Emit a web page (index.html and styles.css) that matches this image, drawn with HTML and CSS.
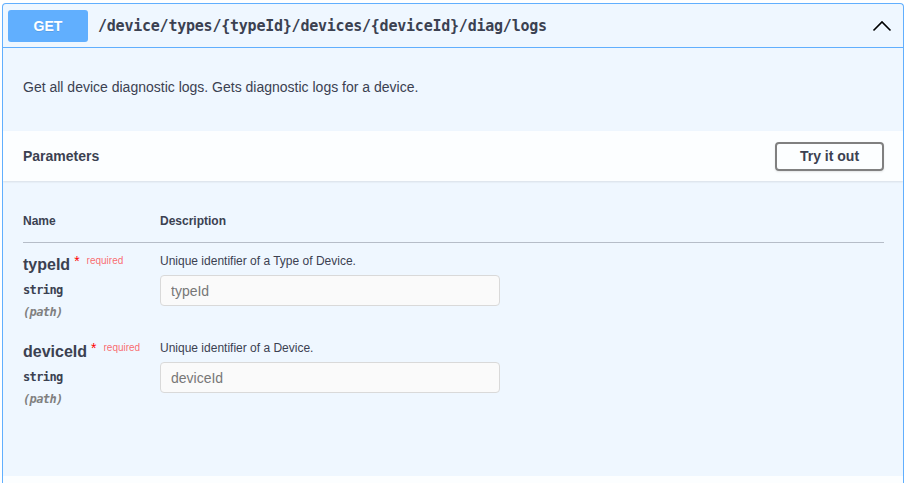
FILE: index.html
```html
<!DOCTYPE html>
<html>
<head>
<meta charset="utf-8">
<link rel="stylesheet" href="styles.css">
</head>
<body>
<div class="opblock">
  <div class="summary">
    <span class="method">GET</span>
    <span class="path">/device/types/{typeId}/devices/{deviceId}/diag/logs</span>
    <svg class="arrow" width="20" height="20" viewBox="0 0 20 20"><polyline points="1.5,14.5 10,6 18.5,14.5" fill="none" stroke="#000" stroke-width="1.6"/></svg>
  </div>
  <div class="description">
    <p>Get all device diagnostic logs. Gets diagnostic logs for a device.</p>
  </div>
  <div class="section-header">
    <h4>Parameters</h4>
    <button class="try-out">Try it out</button>
  </div>
  <div class="table-container">
    <div class="params-head">
      <div>Name</div>
      <div>Description</div>
    </div>
    <div class="param-row">
      <div class="col-name">
        <div class="pname">typeId<span class="star">*</span><span class="req">required</span></div>
        <div class="ptype">string</div>
        <div class="pin">(path)</div>
      </div>
      <div class="col-desc">
        <p>Unique identifier of a Type of Device.</p>
        <input type="text" placeholder="typeId">
      </div>
    </div>
    <div class="param-row">
      <div class="col-name">
        <div class="pname">deviceId<span class="star">*</span><span class="req">required</span></div>
        <div class="ptype">string</div>
        <div class="pin">(path)</div>
      </div>
      <div class="col-desc">
        <p>Unique identifier of a Device.</p>
        <input type="text" placeholder="deviceId">
      </div>
    </div>
  </div>
  <div class="responses-header"></div>
</div>
</body>
</html>
```

FILE: styles.css
```css
* { box-sizing: border-box; }
html, body { margin: 0; padding: 0; background: #fff; }
body { font-family: "Liberation Sans", Arial, sans-serif; color: #3b4151; }

.opblock {
  margin: 3px 1px 0 2px;
  border: 1px solid #61affe;
  border-bottom: none;
  border-radius: 4px 4px 0 0;
  background: #eff7ff;
  overflow: hidden;
}

.summary {
  display: flex;
  align-items: center;
  height: 44px;
  padding: 6px 11px 5px 5px;
  border-bottom: 1px solid #61affe;
}
.method {
  width: 80px;
  height: 32px;
  line-height: 32px;
  background: #61affe;
  color: #fff;
  border-radius: 3px;
  text-align: center;
  font-weight: bold;
  font-size: 14px;
  text-shadow: 0 1px 0 rgba(0,0,0,.1);
}
.path {
  flex: 1;
  padding-left: 10px;
  font-family: "DejaVu Sans Mono", monospace;
  font-weight: bold;
  font-size: 15px;
  letter-spacing: -0.23px;
  color: #3b4151;
}
.arrow { display: block; }

.description {
  height: 83px;
  padding: 0 20px 5px;
  display: flex;
  align-items: center;
}
.description p {
  margin: 0;
  font-size: 14px;
}

.section-header {
  height: 50px;
  padding: 0 19px 0 20px;
  display: flex;
  align-items: center;
  justify-content: space-between;
  background: rgba(255,255,255,.8);
  box-shadow: 0 1px 2px rgba(0,0,0,.1);
}
.section-header h4 {
  margin: 0;
  font-size: 14px;
  font-weight: bold;
}
.try-out {
  width: 109px;
  height: 29px;
  background: transparent;
  border: 2px solid #808080;
  border-radius: 4px;
  font-family: "Liberation Sans", Arial, sans-serif;
  font-size: 14px;
  font-weight: bold;
  color: #3b4151;
  box-shadow: 0 1px 2px rgba(0,0,0,.1);
  padding: 0;
}

.table-container {
  padding: 33px 19px 0 20px;
  height: 295px;
}
.params-head {
  display: grid;
  grid-template-columns: 137px 1fr;
  font-size: 12px;
  font-weight: bold;
  height: 29px;
  border-bottom: 1px solid #b6bdc8;
}
.param-row {
  display: grid;
  grid-template-columns: 137px 1fr;
  height: 87px;
}
.col-name { padding-top: 12px; }
.pname {
  font-size: 16px;
  font-weight: bold;
  line-height: 18px;
  padding-top: 1px;
}
.star {
  color: red;
  font-size: 14px;
  font-weight: normal;
  position: relative;
  top: -4px;
  margin-left: 4px;
}
.req {
  color: rgba(255,0,0,.6);
  font-size: 10px;
  font-weight: normal;
  position: relative;
  top: -6px;
  margin-left: 7px;
}
.ptype {
  font-family: "DejaVu Sans Mono", monospace;
  font-size: 12px;
  letter-spacing: -0.6px;
  font-weight: bold;
  margin-top: 7px;
  line-height: 14px;
}
.pin {
  font-family: "DejaVu Sans Mono", monospace;
  font-size: 12px;
  letter-spacing: -0.6px;
  font-style: italic;
  font-weight: bold;
  color: #808080;
  margin-top: 8px;
  line-height: 14px;
}
.col-desc { padding-top: 11px; }
.col-desc p {
  margin: 0;
  font-size: 12px;
  line-height: 14px;
}
input {
  display: block;
  width: 340px;
  height: 31px;
  margin-top: 7px;
  padding: 0 10px;
  border: 1px solid #d9d9d9;
  border-radius: 4px;
  background: #fafafa;
  font-family: "Liberation Sans", Arial, sans-serif;
  font-size: 14px;
  color: #3b4151;
}
input::placeholder { color: #777; }

.responses-header {
  height: 10px;
  background: rgba(255,255,255,.8);
}
```
